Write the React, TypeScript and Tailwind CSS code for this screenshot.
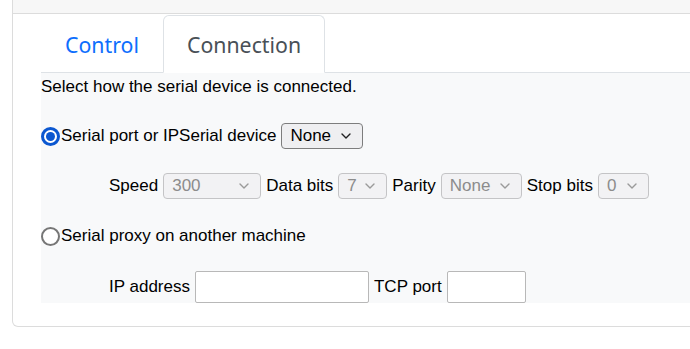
import React from 'react'

function Chevron() {
  return (
    <svg width="10" height="6" viewBox="0 0 10 6" fill="none" stroke="currentColor" strokeWidth="1.4" strokeLinecap="round" strokeLinejoin="round">
      <path d="M1 1l4 4 4-4" />
    </svg>
  )
}

function FakeSelect({ value, width, disabled }: { value: string; width: string; disabled?: boolean }) {
  return (
    <div
      className={
        'flex h-[26px] shrink-0 items-center justify-between rounded-[4px] border pl-[8px] pr-[11px] ' +
        width +
        (disabled
          ? ' border-[#c4c4c6] bg-[#f2f2f4] text-[#8c8c8c]'
          : ' border-[#7d7d7d] bg-[#efeff1] text-black')
      }
    >
      <span>{value}</span>
      <span className={disabled ? 'text-[#9a9a9a]' : 'text-[#222]'}>
        <Chevron />
      </span>
    </div>
  )
}

function Radio({ checked }: { checked?: boolean }) {
  if (checked) {
    return (
      <span className="flex h-[19px] w-[19px] shrink-0 items-center justify-center rounded-full border-[3px] border-[#0b57d0] bg-white">
        <span className="h-[9px] w-[9px] rounded-full bg-[#0b57d0]" />
      </span>
    )
  }
  return <span className="h-[19px] w-[19px] shrink-0 rounded-full border-2 border-[#767676] bg-white" />
}

export default function App() {
  return (
    <div className="h-[349px] w-[690px] overflow-hidden bg-white pl-[12px]">
      <div className="w-[700px] rounded-b-[6px] border-x border-b border-[#dcdcdc]">
        {/* card header tail */}
        <div className="h-[14px] border-b border-[#dcdcdc] bg-[#f7f7f7]" />

        <div className="pb-[23px] pl-[28px] pt-[1px]">
          {/* tabs */}
          <div className="flex border-b border-[#dee2e6] font-['Noto_Sans',sans-serif] text-[21.3px]">
            <div className="flex h-[57px] items-center px-[24px] pt-[2px] text-[#0d6efd]">Control</div>
            <div className="-mb-px flex h-[58px] items-center rounded-t-[6px] border border-b-white border-[#dee2e6] bg-white px-[23px] pt-[2px] text-[#495057]">
              Connection
            </div>
          </div>

          {/* tab content */}
          <div className="bg-[#f8f9fa] pt-px font-['Liberation_Sans',Arial,sans-serif] text-[17px] text-black">
            <p className="flex h-[26px] items-center">Select how the serial device is connected.</p>

            <div className="mt-[23px] flex h-[26px] items-center">
              <Radio checked />
              <span className="ml-px mr-[5px]">Serial port or IPSerial device</span>
              <FakeSelect value="None" width="w-[82px]" />
            </div>

            <div className="mt-[24px] flex h-[26px] items-center gap-[5px] pl-[68px]">
              <span>Speed</span>
              <FakeSelect value="300" width="w-[98px]" disabled />
              <span>Data bits</span>
              <FakeSelect value="7" width="w-[49px]" disabled />
              <span>Parity</span>
              <FakeSelect value="None" width="w-[81px]" disabled />
              <span>Stop bits</span>
              <FakeSelect value="0" width="w-[51px]" disabled />
            </div>

            <div className="mt-[24px] flex h-[26px] items-center">
              <Radio />
              <span className="ml-px">Serial proxy on another machine</span>
            </div>

            <div className="mt-[22px] flex h-[32px] items-center gap-[5px] pl-[68px]">
              <span>IP address</span>
              <input className="h-[32px] w-[174px] rounded-[2px] border border-[#b8b8b8] bg-white px-2 outline-none" />
              <span>TCP port</span>
              <input className="h-[32px] w-[79px] rounded-[2px] border border-[#b8b8b8] bg-white px-2 outline-none" />
            </div>
          </div>
        </div>
      </div>
    </div>
  )
}
